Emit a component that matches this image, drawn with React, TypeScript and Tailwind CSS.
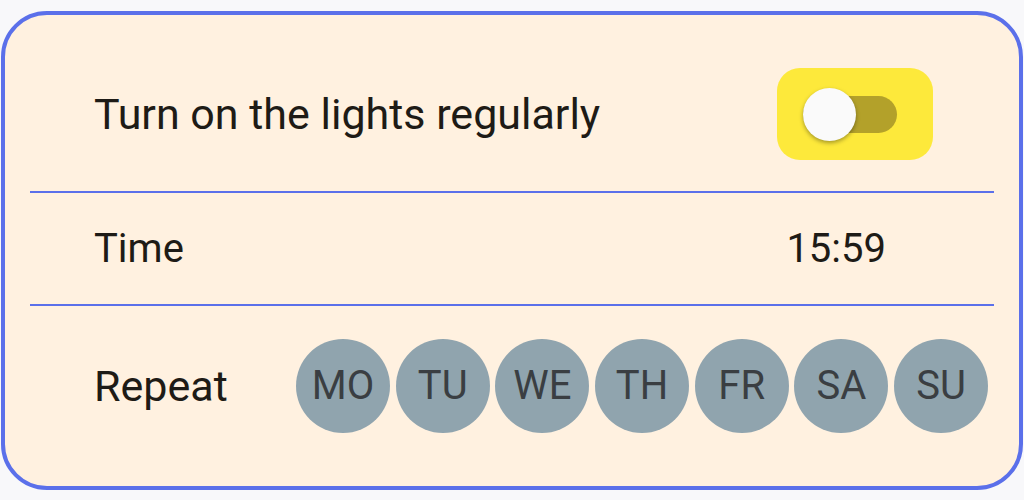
const days = ['MO', 'TU', 'WE', 'TH', 'FR', 'SA', 'SU'];

export default function App() {
  return (
    <div className="w-[1024px] h-[500px] bg-[#f8f8fa] pt-[11px] pl-[1px] font-['Roboto','Liberation_Sans',sans-serif]">
      <div className="w-[1022px] h-[479px] rounded-[46px] border-[4px] border-[#5b70ea] bg-[#fff1e0] flex flex-col">
        {/* Toggle row */}
        <div className="pt-[53px] pb-[31px]">
          <div className="h-[92px] flex items-center justify-between pl-[89px] pr-[86px]">
            <span className="text-[43px] text-[#1e1b16]">Turn on the lights regularly</span>
            <div className="w-[156px] h-[92px] rounded-[23px] bg-[#fde93b] flex items-center pl-[26px]">
              <div className="relative w-[94px] h-[37px] rounded-full bg-[#b3a12a]">
                <div className="absolute left-0 top-[-8px] w-[53px] h-[53px] rounded-full bg-[#fafafa] shadow-[0_2px_4px_rgba(0,0,0,0.35)]" />
              </div>
            </div>
          </div>
        </div>
        <div className="mx-[25px] h-[2px] bg-[#5b70ea]" />

        {/* Time row */}
        <div className="h-[111px] flex items-center justify-between pl-[89px] pr-[133px]">
          <span className="text-[40px] text-[#1e1b16]">Time</span>
          <span className="text-[40px] text-[#1e1b16]">15:59</span>
        </div>
        <div className="mx-[25px] h-[2px] bg-[#5b70ea]" />

        {/* Repeat row */}
        <div className="pt-[33px] flex items-center pl-[89px]">
          <span className="w-[202px] text-[43px] text-[#1e1b16]">Repeat</span>
          <div className="flex gap-[5.7px]">
            {days.map((d) => (
              <div
                key={d}
                className="w-[94px] h-[94px] rounded-full bg-[#90a4ae] flex items-center justify-center text-[40px] text-[#3a3e42]"
              >
                {d}
              </div>
            ))}
          </div>
        </div>
      </div>
    </div>
  );
}
